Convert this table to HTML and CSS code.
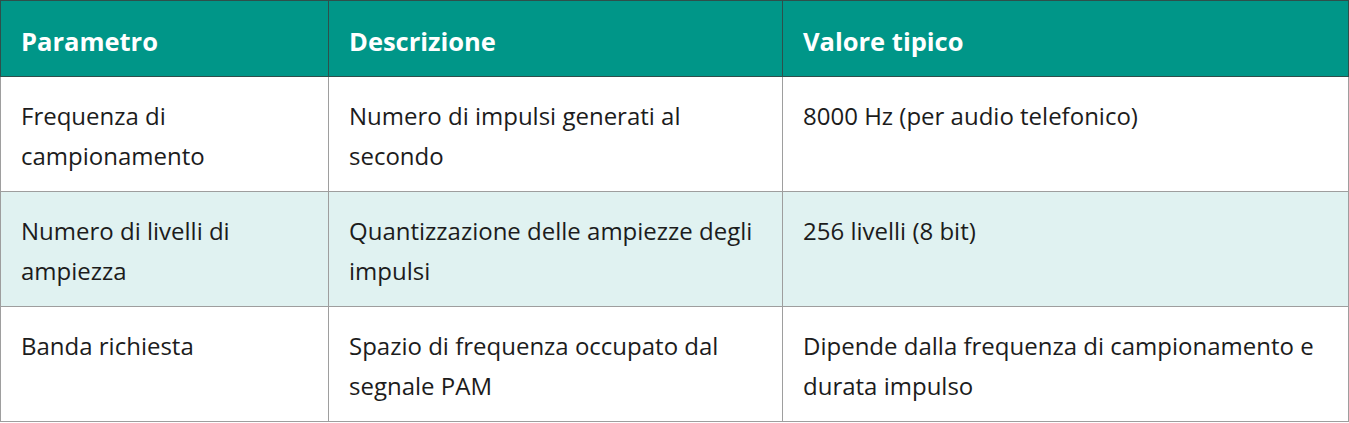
FILE: index.html
```html
<!DOCTYPE html>
<html lang="it">
<head>
<meta charset="utf-8">
<title>Parametri PAM</title>
<link rel="stylesheet" href="styles.css">
</head>
<body>
<table class="tbl">
  <thead>
    <tr>
      <th class="c1">Parametro</th>
      <th class="c2">Descrizione</th>
      <th class="c3">Valore tipico</th>
    </tr>
  </thead>
  <tbody>
    <tr>
      <td>Frequenza di campionamento</td>
      <td>Numero di impulsi generati al secondo</td>
      <td>8000 Hz (per audio telefonico)</td>
    </tr>
    <tr class="alt">
      <td>Numero di livelli di ampiezza</td>
      <td>Quantizzazione delle ampiezze degli impulsi</td>
      <td>256 livelli (8 bit)</td>
    </tr>
    <tr>
      <td>Banda richiesta</td>
      <td>Spazio di frequenza occupato dal segnale PAM</td>
      <td>Dipende dalla frequenza di campionamento e durata impulso</td>
    </tr>
  </tbody>
</table>
</body>
</html>
```
FILE: styles.css
```css
html, body {
  margin: 0;
  padding: 0;
  background: #ffffff;
}
.tbl {
  width: 1349px;
  border-collapse: collapse;
  table-layout: fixed;
  font-family: "Open Sans", "Noto Sans", sans-serif;
  font-size: 24px;
  line-height: 40px;
  color: #1c1c1c;
}
.c1 { width: 287px; }
.c2 { width: 413px; }
.c3 { width: auto; }
.tbl th {
  background: #009688;
  color: #ffffff;
  font-size: 25.5px;
  font-weight: 700;
  text-align: left;
  padding: 20px 20px 15px;
  border: 1px solid #2e4f4b;
}
.tbl td {
  padding: 19px 20px 15px;
  border: 1px solid #9e9e9e;
  vertical-align: top;
}
.tbl tr.alt td {
  background: #e0f2f1;
}
```
